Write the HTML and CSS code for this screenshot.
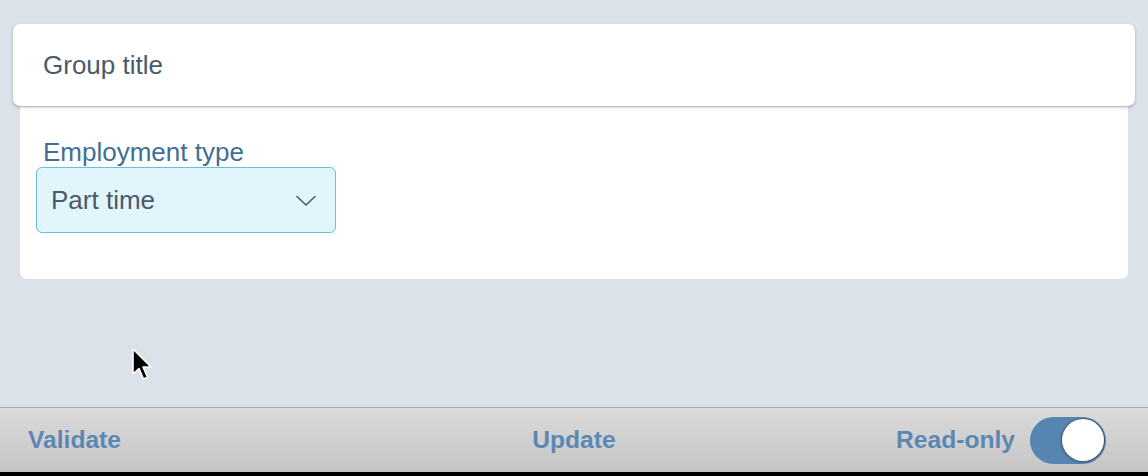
FILE: index.html
```html
<!DOCTYPE html>
<html>
<head>
<meta charset="utf-8">
<link rel="stylesheet" href="styles.css">
</head>
<body>
<div class="screen">
  <main class="content">
    <section class="group">
      <header class="group-head">Group title</header>
      <div class="group-body">
        <label class="field-label">Employment type</label>
        <div class="select">
          <span class="select-value">Part time</span>
          <svg class="chevron" width="20" height="12" viewBox="0 0 20 12"><path d="M1 1.5 L10 10 L19 1.5" fill="none" stroke="#4d5b69" stroke-width="1.6" stroke-linecap="round" stroke-linejoin="round"/></svg>
        </div>
      </div>
    </section>
  </main>
  <footer class="toolbar">
    <span class="tb-left">Validate</span>
    <span class="tb-center">Update</span>
    <span class="tb-right">Read-only <span class="toggle"><span class="knob"></span></span></span>
  </footer>
  <svg class="cursor" width="24" height="36" viewBox="0 0 24 36"><path d="M1 1 L1 26 L7 20.5 L11.5 31 L15.5 29.2 L11 19 L19 19 Z" fill="#000" stroke="#fff" stroke-width="1.6" stroke-linejoin="round"/></svg>
</div>
</body>
</html>
```
FILE: styles.css
```css
html, body {
  margin: 0;
  padding: 0;
}
body {
  background: #dbe2ea;
  font-family: "Liberation Sans", Arial, sans-serif;
}
.screen {
  position: relative;
  width: 1148px;
  height: 476px;
  display: flex;
  flex-direction: column;
  overflow: hidden;
}
.content {
  flex: 1;
  padding: 24px 13px 0;
}
.group {
  display: flex;
  flex-direction: column;
}
.group-head {
  position: relative;
  z-index: 1;
  height: 82px;
  box-sizing: border-box;
  background: #fff;
  border-radius: 7px;
  box-shadow: 0 1px 2px rgba(60, 70, 80, 0.35), 0 2px 4px rgba(60, 70, 80, 0.12);
  padding: 26px 30px 0;
  font-size: 26px;
  line-height: 30px;
  color: #4b5a69;
}
.group-body {
  margin: 0 7px;
  background: #fff;
  border-radius: 0 0 7px 7px;
  padding: 32px 16px 46px;
  display: flex;
  flex-direction: column;
  align-items: flex-start;
}
.field-label {
  font-size: 26px;
  line-height: 29px;
  color: #3f6f96;
  padding-left: 7px;
}
.select {
  width: 300px;
  height: 66px;
  box-sizing: border-box;
  background: #e1f5fc;
  border: 1px solid #6cbfd9;
  border-radius: 6px;
  display: flex;
  align-items: center;
  justify-content: space-between;
  padding: 0 19px 0 14px;
}
.select-value {
  font-size: 26px;
  color: #4b5a69;
}
.chevron {
  display: block;
  margin-top: 2px;
}
.toolbar {
  height: 69px;
  box-sizing: border-box;
  border-top: 1px solid #a5abb1;
  border-bottom: 4px solid #000;
  background: linear-gradient(#dadada, #c5c5c5);
  display: grid;
  grid-template-columns: 1fr auto 1fr;
  align-items: center;
  padding: 0 28px;
  font-size: 24.6px;
  font-weight: bold;
  color: #5b88b2;
}
.tb-center {
  justify-self: center;
}
.tb-right {
  justify-self: end;
  display: flex;
  align-items: center;
  gap: 15px;
}
.toggle {
  width: 76px;
  height: 47px;
  margin-right: 14px;
  border-radius: 24px;
  background: #5585b0;
  display: flex;
  align-items: center;
  justify-content: flex-end;
  padding-right: 2px;
  box-sizing: border-box;
}
.knob {
  width: 42px;
  height: 42px;
  border-radius: 50%;
  background: #fff;
  box-shadow: 0 0 0 1px #3f607c, 0 1px 3px rgba(0, 0, 0, 0.35);
}
.cursor {
  position: absolute;
  left: 132px;
  top: 348px;
}
```
